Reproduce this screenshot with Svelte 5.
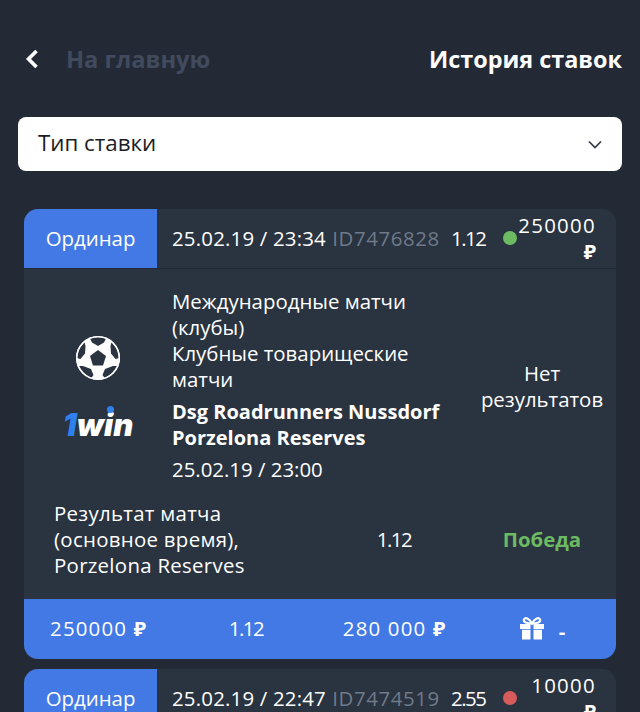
<script lang="ts">
  const bets = [
    {
      type: "Ординар",
      date: "25.02.19 / 23:34",
      id: "ID7476828",
      coef: "1.12",
      won: true,
      stake: "250000",
      league: ["Международные матчи (клубы)", "Клубные товарищеские матчи"],
      teams: ["Dsg Roadrunners Nussdorf", "Porzelona Reserves"],
      start: "25.02.19 / 23:00",
      note: "Нет результатов",
      market: "Результат матча (основное время), Porzelona Reserves",
      outcome: "Победа",
      payout: "280 000",
    },
    {
      type: "Ординар",
      date: "25.02.19 / 22:47",
      id: "ID7474519",
      coef: "2.55",
      won: false,
      stake: "10000",
      league: ["Международные матчи (клубы)"],
      teams: ["Dsg Roadrunners Nussdorf"],
      start: "25.02.19 / 22:00",
      note: "Нет результатов",
      market: "Результат матча",
      outcome: "Победа",
      payout: "25 500",
    },
  ];
</script>

<div class="page">
  <header class="top">
    <div class="back">
      <svg width="14" height="20" viewBox="0 0 14 20" aria-hidden="true">
        <path d="M11.5 2 L3.5 10 L11.5 18" fill="none" stroke="#fff" stroke-width="3.6" />
      </svg>
      <span>На главную</span>
    </div>
    <h1>История ставок</h1>
  </header>

  <div class="select">
    <span>Тип ставки</span>
    <svg width="14" height="9" viewBox="0 0 14 9" aria-hidden="true">
      <path d="M1 1.5 L7 7.5 L13 1.5" fill="none" stroke="#333a46" stroke-width="1.7" />
    </svg>
  </div>

  {#each bets as bet}
    <section class="card">
      <div class="head">
        <div class="type">{bet.type}</div>
        <div class="meta">
          <span class="date">{bet.date}</span>
          <span class="id">{bet.id}</span>
          <span class="coef">{bet.coef}</span>
          <span class="dot" class:won={bet.won}></span>
          <span class="stake amount">{bet.stake} <b>₽</b></span>
        </div>
      </div>

      <div class="match">
        <div class="logos">
          <svg class="ball" width="46" height="46" viewBox="0 0 46 46" aria-hidden="true">
            <circle cx="23" cy="23" r="22" fill="#fff" />
            <g fill="#2a3340">
              <path d="M23 15 L31 21 L28 30.5 L18 30.5 L15 21 Z" />
              <path d="M15 3.5 Q23 0.5 31 3.5 L29 7.5 L23 11 L17 7.5 Z" />
              <path d="M36.5 7 Q43.5 13.5 44.5 23 L40.5 24 L36 18.5 L35.5 11 Z" />
              <path d="M42.5 31 Q38 39.5 30 43.5 L27.5 40 L30 34 L38 31 Z" />
              <path d="M16 43.5 Q8 39.5 3.5 31 L8 31 L16 34 L18.5 40 Z" />
              <path d="M1.5 23 Q2.5 13.5 9.5 7 L10.5 11 L10 18.5 L5.5 24 Z" />
            </g>
            <circle cx="23" cy="23" r="21.2" fill="none" stroke="#fff" stroke-width="1.6" />
          </svg>
          <div class="brand"><span class="one">1</span>w<span class="i">i</span>n</div>
        </div>
        <div class="info">
          {#each bet.league as line}
            <div>{line}</div>
          {/each}
          <div class="teams">
            {#each bet.teams as team}
              <div>{team}</div>
            {/each}
          </div>
          <div class="start">{bet.start}</div>
        </div>
        <div class="note">{bet.note}</div>
      </div>

      <div class="result">
        <div class="market">{bet.market}</div>
        <div class="cell coef">{bet.coef}</div>
        <div class="cell outcome">{bet.outcome}</div>
      </div>

      <div class="foot">
        <div class="cell amount">{bet.stake} <b>₽</b></div>
        <div class="cell coef">{bet.coef}</div>
        <div class="cell amount">{bet.payout} <b>₽</b></div>
        <div class="cell bonus">
          <svg width="26" height="23" viewBox="0 0 26 23" aria-hidden="true">
            <path
              d="M13 6.5 C10 1 6 0 5 2.5 C4 5 8 6.5 13 6.5 C18 6.5 22 5 21 2.5 C20 0 16 1 13 6.5 Z"
              fill="none"
              stroke="#fff"
              stroke-width="2.2"
            />
            <path d="M1 7 H11.5 V12 H1 Z M14.5 7 H25 V12 H14.5 Z M3 12.8 H11.5 V22.5 H3 Z M14.5 12.8 H23 V22.5 H14.5 Z" fill="#fff" />
          </svg>
          <span class="dash">-</span>
        </div>
      </div>
    </section>
  {/each}
</div>

<style>
  :global(body) {
    margin: 0;
    background: #232a35;
  }

  .page {
    height: 712px;
    overflow: hidden;
    background: #232a35;
    color: #fff;
    font-family: "Open Sans", "Noto Sans", sans-serif;
    font-size: 20.4px;
    line-height: 26px;
  }

  .top {
    display: flex;
    align-items: center;
    justify-content: space-between;
    height: 36px;
    padding: 41px 18px 40px 25px;
  }

  .back {
    display: flex;
    align-items: center;
    gap: 27px;
    color: #414b5d;
    font-size: 23.7px;
    font-weight: 700;
  }

  h1 {
    margin: 0;
    font-size: 23.4px;
    font-weight: 700;
  }

  .select {
    display: flex;
    align-items: center;
    justify-content: space-between;
    height: 54px;
    margin: 0 18px 38px;
    padding: 0 20px;
    background: #fff;
    border-radius: 8px;
    color: #1a1d24;
    font-size: 22.3px;
  }

  .select span {
    margin-bottom: 2px;
  }

  .card {
    margin: 0 24px 10px;
    background: #2a3340;
    border-radius: 14px;
    overflow: hidden;
  }

  .head {
    display: flex;
    height: 60px;
    border-bottom: 1px solid #232a35;
    box-sizing: border-box;
  }

  .type {
    display: flex;
    align-items: center;
    justify-content: center;
    width: 133px;
    padding-bottom: 1px;
    box-sizing: border-box;
    flex: none;
    background: #4279e4;
  }

  .meta {
    display: flex;
    flex: 1;
    align-items: center;
    justify-content: space-between;
    padding: 0 20px 1px 15px;
  }

  .date {
    letter-spacing: 0.2px;
  }

  .id {
    color: #6f7a8a;
    letter-spacing: 0.6px;
    margin-left: -2px;
  }

  .coef {
    letter-spacing: -1.5px;
  }

  .meta .coef {
    margin-left: 3px;
  }

  .amount {
    letter-spacing: 1.2px;
  }

  .amount b {
    letter-spacing: 0;
  }

  .dot {
    width: 14px;
    height: 14px;
    margin-left: 9px;
    margin-right: -9px;
    border-radius: 50%;
    background: #d65b5b;
    flex: none;
  }

  .dot.won {
    background: #6cba62;
  }

  .stake {
    width: 80px;
    text-align: right;
    letter-spacing: 1.3px;
    margin-top: -1px;
  }

  .match {
    display: grid;
    grid-template-columns: 148px 1fr 148px;
    height: 214px;
    padding-top: 19px;
    box-sizing: border-box;
  }

  .logos {
    display: flex;
    flex-direction: column;
    align-items: center;
    padding-top: 47px;
    gap: 27px;
  }

  .brand {
    position: relative;
    font-family: "Inter", sans-serif;
    font-size: 31px;
    line-height: 34px;
    font-weight: 900;
    font-style: italic;
  }

  .one {
    color: #2f80ed;
  }

  .i {
    position: relative;
  }

  .i::after {
    content: "";
    position: absolute;
    left: 3px;
    top: 0;
    width: 7px;
    height: 7px;
    border-radius: 50%;
    background: #2f80ed;
  }

  .info {
    width: 270px;
  }

  .teams {
    font-weight: 700;
    font-size: 20px;
    margin-top: 7px;
  }

  .start {
    margin-top: 5px;
  }

  .note {
    display: flex;
    align-items: center;
    justify-content: center;
    text-align: center;
    height: 174px;
    margin-top: 11px;
  }

  .result {
    display: grid;
    grid-template-columns: 296px 148px 148px;
    align-items: center;
    height: 116px;
    padding-bottom: 4px;
    box-sizing: border-box;
  }

  .market {
    padding-left: 30px;
    width: 215px;
    letter-spacing: 0.3px;
  }

  .cell {
    text-align: center;
  }

  .outcome {
    color: #6cba62;
    font-weight: 700;
  }

  .foot {
    display: grid;
    grid-template-columns: repeat(4, 148px);
    align-items: center;
    height: 60px;
    padding-bottom: 2px;
    box-sizing: border-box;
    background: #4279e4;
  }

  .bonus {
    display: flex;
    align-items: center;
    justify-content: center;
    gap: 14px;
  }

  .dash {
    font-weight: 700;
    margin-top: 6px;
  }
</style>
